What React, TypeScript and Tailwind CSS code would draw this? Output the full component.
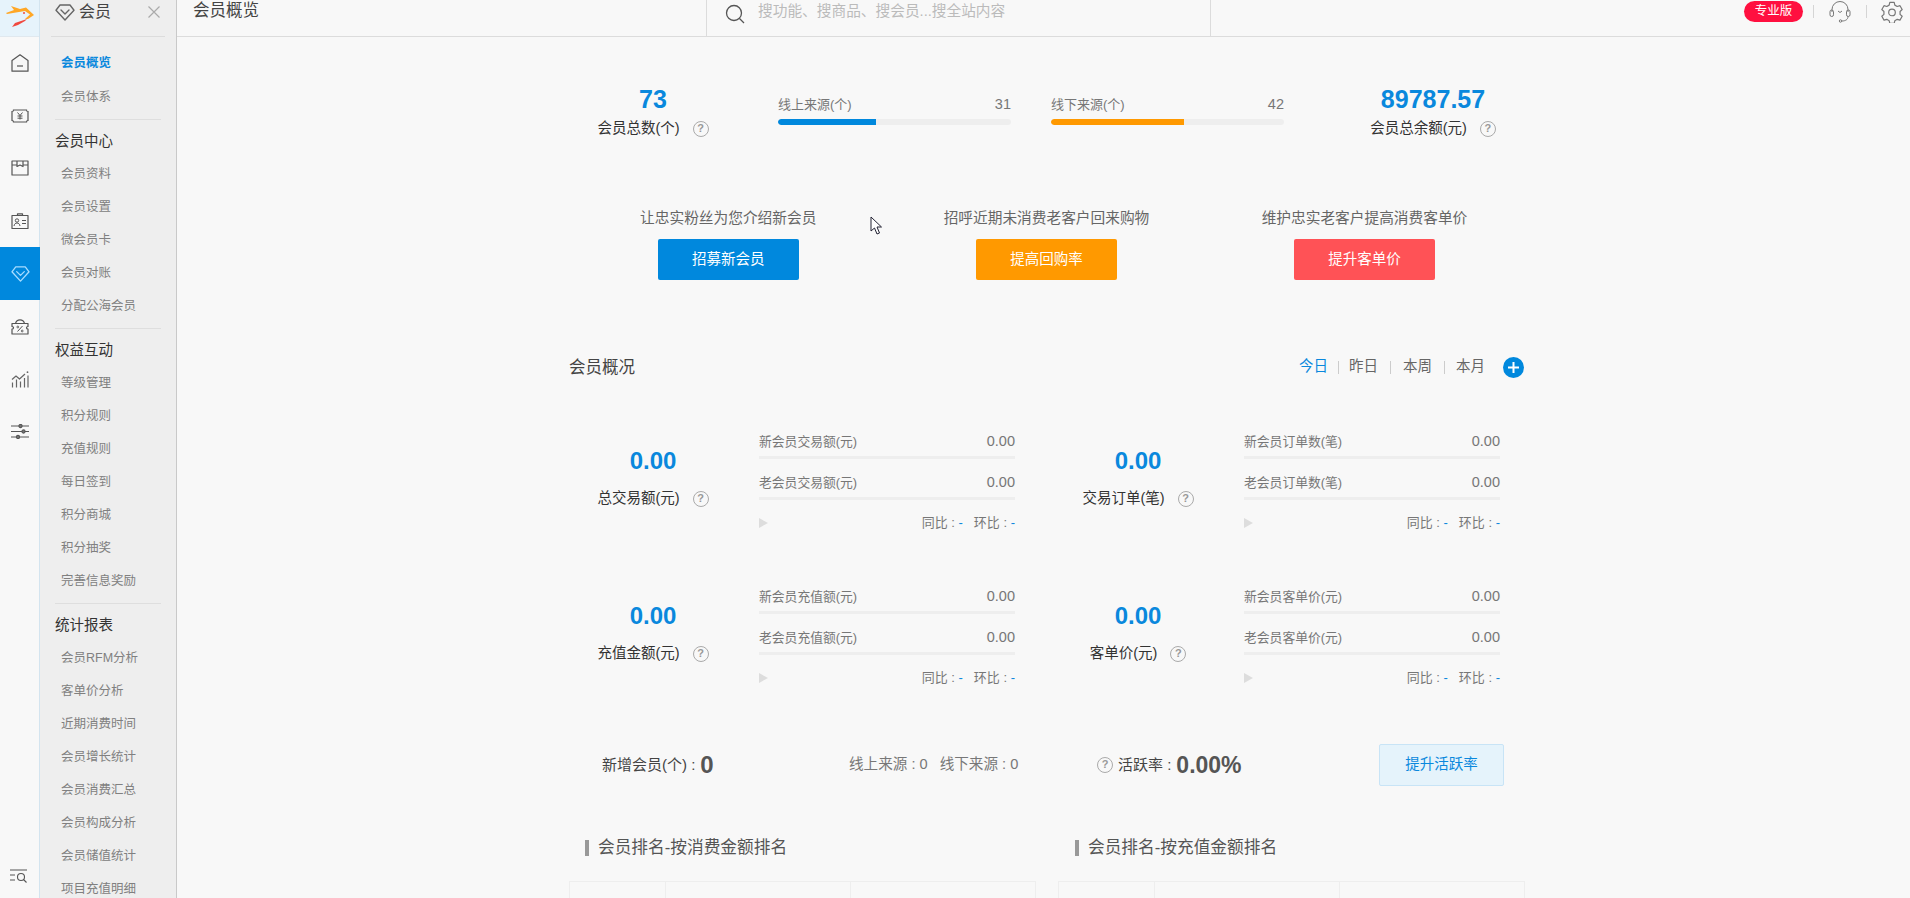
import React from "react";

const blue = "text-[#0a88dd]";

const Diamond = ({ className }: { className?: string }) => (
  <svg viewBox="0 0 20 20" fill="none" stroke="currentColor" strokeWidth={1.4} className={className}>
    <path d="M5 3h10l4 5.2L10 18 1 8.2 5 3z" strokeLinejoin="round" />
    <path d="M6 8l4 4 4-4" strokeLinecap="round" strokeLinejoin="round" />
  </svg>
);

const HomeIcon = () => (
  <svg viewBox="0 0 18 18" fill="none" stroke="#555" strokeWidth={1.2} className="w-[18px] h-[18px]">
    <path d="M1 6.5L9 .8l8 5.7v10.7H1V6.5z" strokeLinejoin="round" />
    <path d="M6 12h6" />
  </svg>
);

const MoneyIcon = () => (
  <svg viewBox="0 0 18 14" fill="none" stroke="#555" strokeWidth={1.2} className="w-[18px] h-[14px]">
    <path d="M2.5 1h13c0 1 .5 1.500 1.500 1.500v9c-1 0-1.500.5-1.500 1.500h-13C2.500 12 2 11.500 1 11.500v-9C2 2.500 2.500 2 2.500 1z" />
    <path d="M6.500 3.500L9 6.500l2.500-3M6.500 7h5M6.500 9.200h5M9 6.500v4" strokeWidth={1} />
  </svg>
);

const BoxIcon = () => (
  <svg viewBox="0 0 18 16" fill="none" stroke="#555" strokeWidth={1.2} className="w-[18px] h-[16px]">
    <path d="M1 1h16v14H1zM1 5h5M12 5h5M6 1v5.500l3-1.500 3 1.500V1" strokeLinejoin="round" />
  </svg>
);

const CardIcon = () => (
  <svg viewBox="0 0 18 16" fill="none" stroke="#555" strokeWidth={1.2} className="w-[18px] h-[16px]">
    <path d="M1 2.500h16v13H1zM6.500 2.500V.8h5v1.700" strokeLinejoin="round" />
    <circle cx="6" cy="7.500" r="1.700" strokeWidth={1} />
    <path d="M3 13c.3-2 1.500-3 3-3s2.700 1 3 3M11 7.500h4M11 10.500h4" strokeWidth={1} />
  </svg>
);

const TicketIcon = () => (
  <svg viewBox="0 0 18 16" fill="none" stroke="#555" strokeWidth={1.2} className="w-[18px] h-[16px]">
    <path d="M1 4.500h16v3c-1 0-1.500.5-1.500 1.200s.5 1.300 1.500 1.300v5H1v-5c1 0 1.500-.6 1.500-1.300S2 7.500 1 7.500v-3z" strokeLinejoin="round" />
    <path d="M4.500 4.500C5 2.500 7 .8 9 .8s4 1.700 4.500 3.700" />
    <path d="M6.500 12.500l5-5.500" strokeWidth={1} />
    <circle cx="6.800" cy="8" r=".9" strokeWidth={.9} />
    <circle cx="11.200" cy="12" r=".9" strokeWidth={.9} />
  </svg>
);

const ChartIcon = () => (
  <svg viewBox="0 0 18 17" fill="none" stroke="#666" strokeWidth={1.2} className="w-[18px] h-[17px]">
    <path d="M1 8.500l4-3.500 3.500 3L14 3" strokeLinejoin="round" />
    <circle cx="16.500" cy="1.200" r=".9" fill="#666" stroke="none" />
    <path d="M1.500 16.500v-5M5.500 16.500V8.500M9.500 16.500v-6M13.500 16.500V7M17 16.500V4.500" />
  </svg>
);

const SliderIcon = () => (
  <svg viewBox="0 0 18 15" stroke="#555" strokeWidth={1.1} className="w-[18px] h-[15px]">
    <path d="M0 2h18M0 7.500h18M0 13h18" />
    <circle cx="9.500" cy="2" r="1.600" fill="#777" />
    <circle cx="12.500" cy="7.500" r="1.600" fill="#777" />
    <circle cx="7" cy="13" r="1.600" fill="#777" />
  </svg>
);

const SearchListIcon = () => (
  <svg viewBox="0 0 18 14" fill="none" stroke="#555" strokeWidth={1.1} className="w-[18px] h-[14px]">
    <path d="M0 1h17M0 6h5M0 11h5" />
    <circle cx="11" cy="8" r="3.500" />
    <path d="M13.500 10.500l3 3" />
  </svg>
);

const Logo = () => (
  <svg viewBox="0 0 28 22" className="w-[28px] h-[22px]">
    <path d="M5 0l9 3 6-1.500L28 9l-6 4h-3l5-4.500L19 5l-6 1-12 2-1-1 8-3z" fill="#ffa726" />
    <path d="M6 21l3-4 6-2 6-2-2 2-7 4z" fill="#f0483e" />
    <circle cx="18" cy="7" r="1" fill="#f0483e" />
  </svg>
);

const Help = () => (
  <span className="w-[16px] h-[16px] shrink-0 rounded-full border-[1.5px] border-[#aaa] text-[#999] text-[11px] leading-[13px] font-bold text-center">
    ?
  </span>
);

const railTop = [
  <HomeIcon key="home" />,
  <MoneyIcon key="money" />,
  <BoxIcon key="box" />,
  <CardIcon key="card" />,
];

const railBottom = [
  <TicketIcon key="ticket" />,
  <ChartIcon key="chart" />,
  <SliderIcon key="slider" />,
];

const groups = [
  { title: "", items: ["会员概览", "会员体系"] },
  { title: "会员中心", items: ["会员资料", "会员设置", "微会员卡", "会员对账", "分配公海会员"] },
  { title: "权益互动", items: ["等级管理", "积分规则", "充值规则", "每日签到", "积分商城", "积分抽奖", "完善信息奖励"] },
  { title: "统计报表", items: ["会员RFM分析", "客单价分析", "近期消费时间", "会员增长统计", "会员消费汇总", "会员构成分析", "会员储值统计", "项目充值明细"] },
];

const Rail = () => (
  <div className="w-[40px] shrink-0 h-full bg-[#f8f8f8] border-r border-[#d3e4ef] flex flex-col relative">
    <div className="h-[37px] shrink-0 bg-[#e6f3fb] border-b border-[#e0e8ee] flex items-center justify-center pb-[2px]">
      <Logo />
    </div>
    {railTop.map((icon, i) => (
      <div key={i} className="h-[52.6px] shrink-0 flex items-center justify-center">
        {icon}
      </div>
    ))}
    <div className="h-[53px] shrink-0 -mr-px bg-[#0088dd] flex items-center justify-center text-[#a8dcff]">
      <Diamond className="w-[19px] h-[19px]" />
    </div>
    {railBottom.map((icon, i) => (
      <div key={i} className="h-[52.6px] shrink-0 flex items-center justify-center">
        {icon}
      </div>
    ))}
    <div className="absolute bottom-[15px] left-[10px]">
      <SearchListIcon />
    </div>
  </div>
);

const SubMenu = () => (
  <div className="w-[137px] shrink-0 h-full overflow-hidden bg-[#eeeeee] border-r border-[#c9c9c9] flex flex-col">
    <div className="h-[37px] shrink-0 mx-[11px] border-b border-[#dcdcdc] flex items-center pb-[13px] text-[#444]">
      <Diamond className="w-[20px] h-[20px] ml-[4px] text-[#666]" />
      <span className="ml-[4px] text-[16px]">会员</span>
      <svg viewBox="0 0 12 12" stroke="#aaa" strokeWidth={1.2} className="w-[12px] h-[12px] ml-auto mr-[5px]">
        <path d="M.5.500l11 11M11.500.500l-11 11" />
      </svg>
    </div>
    {groups.map((g, gi) => (
      <div key={gi} className={gi === 0 ? "pt-[10px]" : "mx-[15px] border-t border-[#dedede] mt-[5px]"}>
        {g.title && <div className="h-[33px] pt-[2px] text-[14.5px] leading-[38px] text-[#333]">{g.title}</div>}
        <div className={gi === 0 ? "pl-[21px]" : "pl-[6px] pt-[5px]"}>
          {g.items.map((item, i) => (
            <div
              key={item}
              className={
                gi === 0 && i === 0
                  ? "h-[34px] leading-[33px] text-[12.5px] font-bold text-[#0a88dd] whitespace-nowrap"
                  : "h-[33px] leading-[33px] text-[12.5px] text-[#808080] whitespace-nowrap"
              }
            >
              {item}
            </div>
          ))}
        </div>
      </div>
    ))}
  </div>
);

const Header = () => (
  <div className="h-[37px] shrink-0 border-b border-[#dcdcdc] flex text-[#555]">
    <div className="w-[529px] shrink-0 pl-[16px] text-[16.5px] leading-[21px] text-[#444]">会员概览</div>
    <div className="w-[505px] shrink-0 border-x border-[#dcdcdc] flex items-start pl-[18px] pt-[1px]">
      <svg viewBox="0 0 20 20" fill="none" stroke="#555" strokeWidth={1.3} className="w-[20px] h-[20px] mt-[3px]">
        <circle cx="9" cy="9" r="7.500" />
        <path d="M14.500 14.500l4.500 4.500" />
      </svg>
      <span className="ml-[13px] text-[14.7px] leading-[20px] text-[#bbbbbb] whitespace-nowrap">搜功能、搜商品、搜会员...搜全站内容</span>
    </div>
    <div className="flex-1 flex items-start justify-end pt-[1px]">
      <span className="w-[59px] h-[21px] rounded-full bg-[#ff1040] text-white text-[12.5px] leading-[21px] text-center">专业版</span>
      <span className="w-px h-[13px] bg-[#d5d5d5] ml-[10px] mt-[4px]" />
      <svg viewBox="0 0 22 22" fill="none" stroke="#777" strokeWidth={1} className="w-[22px] h-[22px] ml-[15px]">
        <path d="M3 11V8.500a8 8 0 0116 0V11" />
        <rect x="1" y="9" width="3.500" height="6.500" rx="1.700" />
        <rect x="17.500" y="9" width="3.500" height="6.500" rx="1.700" />
        <path d="M19 15.500c0 3-2.500 4.500-6 4.500" />
        <circle cx="11.500" cy="20" r="1.200" />
        <path d="M9 10l2 1.500 2-1.500" />
      </svg>
      <span className="w-px h-[13px] bg-[#d5d5d5] ml-[15px] mt-[4px]" />
      <svg viewBox="0 0 24 24" fill="none" stroke="#777" strokeWidth={1.300} className="w-[22px] h-[22px] ml-[14px] mr-[7px]">
        <path d="M9.600 1.500h4.800l.7 3 2.600 1.500 3-.9 2.400 4.200-2.300 2.100v3.200l2.300 2.100-2.400 4.200-3-.9-2.600 1.500-.7 3H9.600l-.7-3-2.600-1.500-3 .9-2.400-4.200 2.300-2.100v-3.200L.9 9.300l2.400-4.200 3 .9 2.600-1.500z" strokeLinejoin="round" />
        <circle cx="12" cy="12.500" r="3.600" />
      </svg>
    </div>
  </div>
);

const Label = ({ children }: { children: string }) => (
  <div className="h-[20px] flex items-center gap-[13px] text-[14.5px] text-[#333] whitespace-nowrap">
    {children}
    <Help />
  </div>
);

const Source = ({ label, value, pct, color }: { label: string; value: string; pct: number; color: string }) => (
  <div className="w-[233px] shrink-0 pt-[12px]">
    <div className="h-[18px] flex justify-between items-center text-[13px] text-[#777]">
      <span>{label}</span>
      <span className="text-[14.5px]">{value}</span>
    </div>
    <div className="mt-[5px] h-[6px] rounded-[3px] bg-[#eeeeee] overflow-hidden">
      <div className={`h-full rounded-l-[3px] ${color}`} style={{ width: `${pct}%` }} />
    </div>
  </div>
);

const actions = [
  { tip: "让忠实粉丝为您介绍新会员", btn: "招募新会员", color: "bg-[#0088dd]" },
  { tip: "招呼近期未消费老客户回来购物", btn: "提高回购率", color: "bg-[#ff9900]" },
  { tip: "维护忠实老客户提高消费客单价", btn: "提升客单价", color: "bg-[#ff5256]" },
];

const cells = [
  { label: "总交易额(元)", a: "新会员交易额(元)", b: "老会员交易额(元)" },
  { label: "交易订单(笔)", a: "新会员订单数(笔)", b: "老会员订单数(笔)" },
  { label: "充值金额(元)", a: "新会员充值额(元)", b: "老会员充值额(元)" },
  { label: "客单价(元)", a: "新会员客单价(元)", b: "老会员客单价(元)" },
];

const ListRow = ({ name }: { name: string }) => (
  <div>
    <div className="h-[22px] flex justify-between items-center text-[#777]">
      <span className="text-[12.8px]">{name}</span>
      <span className="text-[14.5px]">0.00</span>
    </div>
    <div className="mt-[3px] h-[3px] bg-[#eeeeee]" />
  </div>
);

const MetricCell = ({ label, a, b }: { label: string; a: string; b: string }) => (
  <div className="h-[155px] flex">
    <div className="w-[168px] shrink-0 pt-[15px] flex flex-col items-center">
      <div className={`h-[30px] leading-[30px] text-[24px] font-bold ${blue}`}>0.00</div>
      <div className="mt-[13px]">
        <Label>{label}</Label>
      </div>
    </div>
    <div className="w-[256px] ml-[22px] flex flex-col gap-[13px]">
      <ListRow name={a} />
      <ListRow name={b} />
      <div className="h-[20px] flex items-center text-[13px] text-[#777]">
        <span className="w-0 h-0 border-y-[5px] border-y-transparent border-l-[9px] border-l-[#dddddd]" />
        <span className="ml-auto">同比 : <span className={blue}>-</span></span>
        <span className="ml-[11px]">环比 : <span className={blue}>-</span></span>
      </div>
    </div>
  </div>
);

const RankTable = () => (
  <div className="w-[467px] h-[40px] border border-[#eeeeee] flex">
    <div className="w-[95px]" />
    <div className="w-[185px] border-l border-[#eeeeee]" />
    <div className="flex-1 border-l border-[#eeeeee]" />
  </div>
);

export default function App() {
  return (
    <div className="w-[1910px] h-[898px] overflow-hidden flex bg-[#f8f8f8] font-['Liberation_Sans','Noto_Sans_CJK_SC',sans-serif] relative">
      <Rail />
      <SubMenu />
      <div className="flex-1 min-w-0 h-full flex flex-col">
        <Header />
        <div className="w-[957px] ml-[392px] pt-[47px]">
          <div className="flex items-start">
            <div className="w-[168px] shrink-0 flex flex-col items-center">
              <div className={`h-[30px] leading-[30px] text-[25px] font-bold ${blue}`}>73</div>
              <div className="mt-[5px]">
                <Label>会员总数(个)</Label>
              </div>
            </div>
            <div className="ml-[41px]">
              <Source label="线上来源(个)" value="31" pct={42} color="bg-[#0088dd]" />
            </div>
            <div className="ml-[40px]">
              <Source label="线下来源(个)" value="42" pct={57} color="bg-[#ff9900]" />
            </div>
            <div className="w-[168px] shrink-0 ml-[65px] flex flex-col items-center">
              <div className={`h-[30px] leading-[30px] text-[25px] font-bold ${blue}`}>89787.57</div>
              <div className="mt-[5px]">
                <Label>会员总余额(元)</Label>
              </div>
            </div>
          </div>

          <div className="mt-[69px] grid grid-cols-[318.5px_318px_318px]">
            {actions.map((a) => (
              <div key={a.btn} className="flex flex-col items-center">
                <div className="h-[20px] leading-[20px] text-[14.7px] text-[#666] whitespace-nowrap">{a.tip}</div>
                <div className={`mt-[11px] w-[141px] h-[41px] rounded-[2px] text-white text-[14.5px] leading-[41px] text-center ${a.color}`}>
                  {a.btn}
                </div>
              </div>
            ))}
          </div>

          <div className="mt-[75px] h-[24px] flex items-center">
            <span className="text-[16.5px] text-[#444]">会员概况</span>
            <div className="ml-auto mr-[2px] flex items-center text-[14.5px] text-[#666] whitespace-nowrap">
              <span className={blue}>今日</span>
              <span className="w-px h-[13px] bg-[#cccccc] mx-[10px]" />
              <span>昨日</span>
              <span className="w-px h-[13px] bg-[#cccccc] mx-[12px]" />
              <span>本周</span>
              <span className="w-px h-[13px] bg-[#cccccc] ml-[12px] mr-[11px]" />
              <span>本月</span>
              <span className="ml-[18px] w-[21px] h-[21px] rounded-full bg-[#0088dd] flex items-center justify-center">
                <svg viewBox="0 0 11 11" stroke="#fff" strokeWidth={2} className="w-[11px] h-[11px]">
                  <path d="M5.500 0v11M0 5.500h11" />
                </svg>
              </span>
            </div>
          </div>

          <div className="mt-[52px] grid grid-cols-[485px_472px]">
            {cells.map((c) => (
              <MetricCell key={c.label} label={c.label} a={c.a} b={c.b} />
            ))}
          </div>

          <div className="mt-[3px] h-[42px] flex items-center whitespace-nowrap">
            <div className="w-[280px] shrink-0 pl-[33px] flex items-center text-[15px] text-[#444]">
              新增会员(个) :
              <span className="ml-[5px] text-[24px] font-bold text-[#555] leading-[24px]">0</span>
            </div>
            <div className="w-[248px] shrink-0 flex text-[14.6px] text-[#777]">
              <span>线上来源 : 0</span>
              <span className="ml-[12px]">线下来源 : 0</span>
            </div>
            <Help />
            <span className="ml-[5px] text-[15px] text-[#444]">活跃率 :</span>
            <span className="ml-[5px] text-[23px] font-bold text-[#555] leading-[24px]">0.00%</span>
            <div className="ml-auto mr-[22px] w-[125px] h-[42px] rounded-[2px] bg-[#e5f3fb] border border-[#c8e4f6] text-[#0a88dd] text-[14.5px] leading-[38px] text-center">
              提升活跃率
            </div>
          </div>

          <div className="mt-[49px] h-[24px] grid grid-cols-[490px_467px]">
            {["会员排名-按消费金额排名", "会员排名-按充值金额排名"].map((t) => (
              <div key={t} className="pl-[16px] flex items-center">
                <span className="w-[4px] h-[16px] bg-[#999999]" />
                <span className="ml-[9px] text-[16.7px] text-[#555] whitespace-nowrap">{t}</span>
              </div>
            ))}
          </div>

          <div className="mt-[22px] grid grid-cols-[489px_468px]">
            <RankTable />
            <RankTable />
          </div>
        </div>
      </div>

      {/* mouse pointer caught in the screenshot */}
      <svg viewBox="0 0 13 19" fill="#fff" stroke="#223" strokeWidth={1} className="absolute left-[870px] top-[216px] w-[13px] h-[19px]">
        <path d="M1 1v14l3.500-3 2.500 6 2.500-1-2.500-6H11.500z" strokeLinejoin="round" />
      </svg>
    </div>
  );
}
